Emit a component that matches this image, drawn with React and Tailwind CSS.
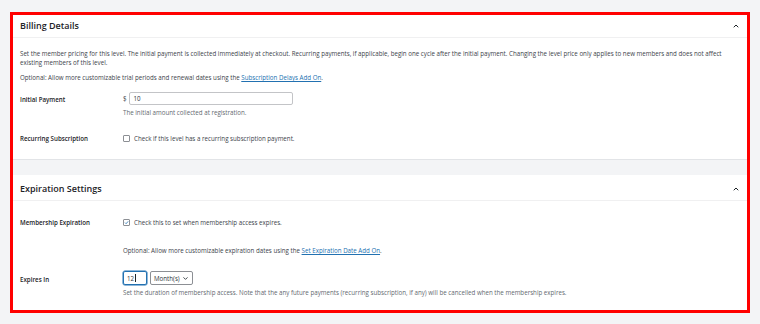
import { ChevronUp, ChevronDown } from "lucide-react";

const font = { fontFamily: '"Open Sans", "Noto Sans", sans-serif' };

function Checkbox({ checked }) {
  return (
    <span className="inline-flex h-[7px] w-[7px] items-center justify-center rounded-[1px] border border-[#8c8f94] bg-white shrink-0">
      {checked && (
        <svg viewBox="0 0 10 10" className="h-[7px] w-[7px]">
          <path d="M2 5.2 L4.2 7.4 L8.4 2.6" fill="none" stroke="#2271b1" strokeWidth="1.6" />
        </svg>
      )}
    </span>
  );
}

function PanelHeader({ title, h }) {
  return (
    <div className={`flex items-center justify-between border-b border-[#f0f0f1] pl-[7px] pr-[7px] ${h}`}>
      <h2 className="text-[9px] font-semibold text-[#1d2327]">{title}</h2>
      <ChevronUp className="h-[8px] w-[8px] text-[#1d2327]" strokeWidth={3} />
    </div>
  );
}

export default function App() {
  return (
    <div className="h-[324px] w-[760px] bg-[#f3f4f6] px-[10px] pt-[12px]" style={font}>
      <div className="flex h-[301px] flex-col border-[3px] border-[#ff0000] bg-[#f3f4f6]">
        {/* Billing */}
        <section className="h-[145px] border-b border-[#e2e4e7] bg-white">
          <PanelHeader title="Billing Details" h="h-[23px]" />
          <div className="pl-[7px] pr-[20px] pt-[11px] text-[6.2px] leading-[9px] text-[#3c434a]">
            <p>
              Set the member pricing for this level. The initial payment is collected immediately at checkout. Recurring payments, if applicable, begin one cycle after the initial payment. Changing the level price only applies to new members and does not affect existing members of this level.
            </p>
            <p className="mt-[6px]">
              Optional: Allow more customizable trial periods and renewal dates using the{" "}
              <span className="text-[#2271b1] underline">Subscription Delays Add On</span>.
            </p>
            <div className="mt-[10px] flex">
              <div className="w-[103px] pt-[3px] font-semibold text-[#1d2327]">Initial Payment</div>
              <div>
                <div className="flex items-center gap-[2px]">
                  <span>$</span>
                  <div className="flex h-[13px] w-[164px] items-center rounded-[2px] border border-[#c3c4c7] px-[4px] text-[#2c3338]">10</div>
                </div>
                <p className="mt-[3px] text-[#646970]">The initial amount collected at registration.</p>
              </div>
            </div>
            <div className="mt-[17px] flex items-center">
              <div className="w-[103px] font-semibold text-[#1d2327]">Recurring Subscription</div>
              <div className="flex items-center gap-[4px]">
                <Checkbox />
                <span>Check if this level has a recurring subscription payment.</span>
              </div>
            </div>
          </div>
        </section>

        <div className="h-[15px] shrink-0" />

        {/* Expiration */}
        <section className="flex-1 bg-white">
          <PanelHeader title="Expiration Settings" h="h-[26px] pt-[2px]" />
          <div className="pl-[7px] pr-[20px] text-[6.2px] leading-[9px] text-[#3c434a]">
            <div className="mt-[17px] flex items-center">
              <div className="w-[103px] font-semibold text-[#1d2327]">Membership Expiration</div>
              <div className="flex items-center gap-[4px]">
                <Checkbox checked />
                <span>Check this to set when membership access expires.</span>
              </div>
            </div>
            <p className="ml-[103px] mt-[19px]">
              Optional: Allow more customizable expiration dates using the{" "}
              <span className="text-[#2271b1] underline">Set Expiration Date Add On</span>.
            </p>
            <div className="mt-[16px] flex">
              <div className="w-[103px] pt-[4px] font-semibold text-[#1d2327]">Expires In</div>
              <div>
                <div className="flex items-center gap-[3px]">
                  <div className="flex h-[14px] w-[24px] items-center rounded-[2px] border border-[#2271b1] px-[3px] text-[#2c3338] shadow-[0_0_0_0.5px_#2271b1]">
                    12<span className="ml-[0.5px] h-[8px] w-[0.5px] bg-[#1d2327]" />
                  </div>
                  <div className="flex h-[14px] w-[43px] items-center justify-between rounded-[2px] border border-[#8c8f94] px-[3px] text-[#2c3338]">
                    <span>Month(s)</span>
                    <ChevronDown className="h-[7px] w-[7px]" strokeWidth={3} />
                  </div>
                </div>
                <p className="mt-[3px] text-[#646970]">
                  Set the duration of membership access. Note that the any future payments (recurring subscription, if any) will be cancelled when the membership expires.
                </p>
              </div>
            </div>
          </div>
        </section>
      </div>
    </div>
  );
}
